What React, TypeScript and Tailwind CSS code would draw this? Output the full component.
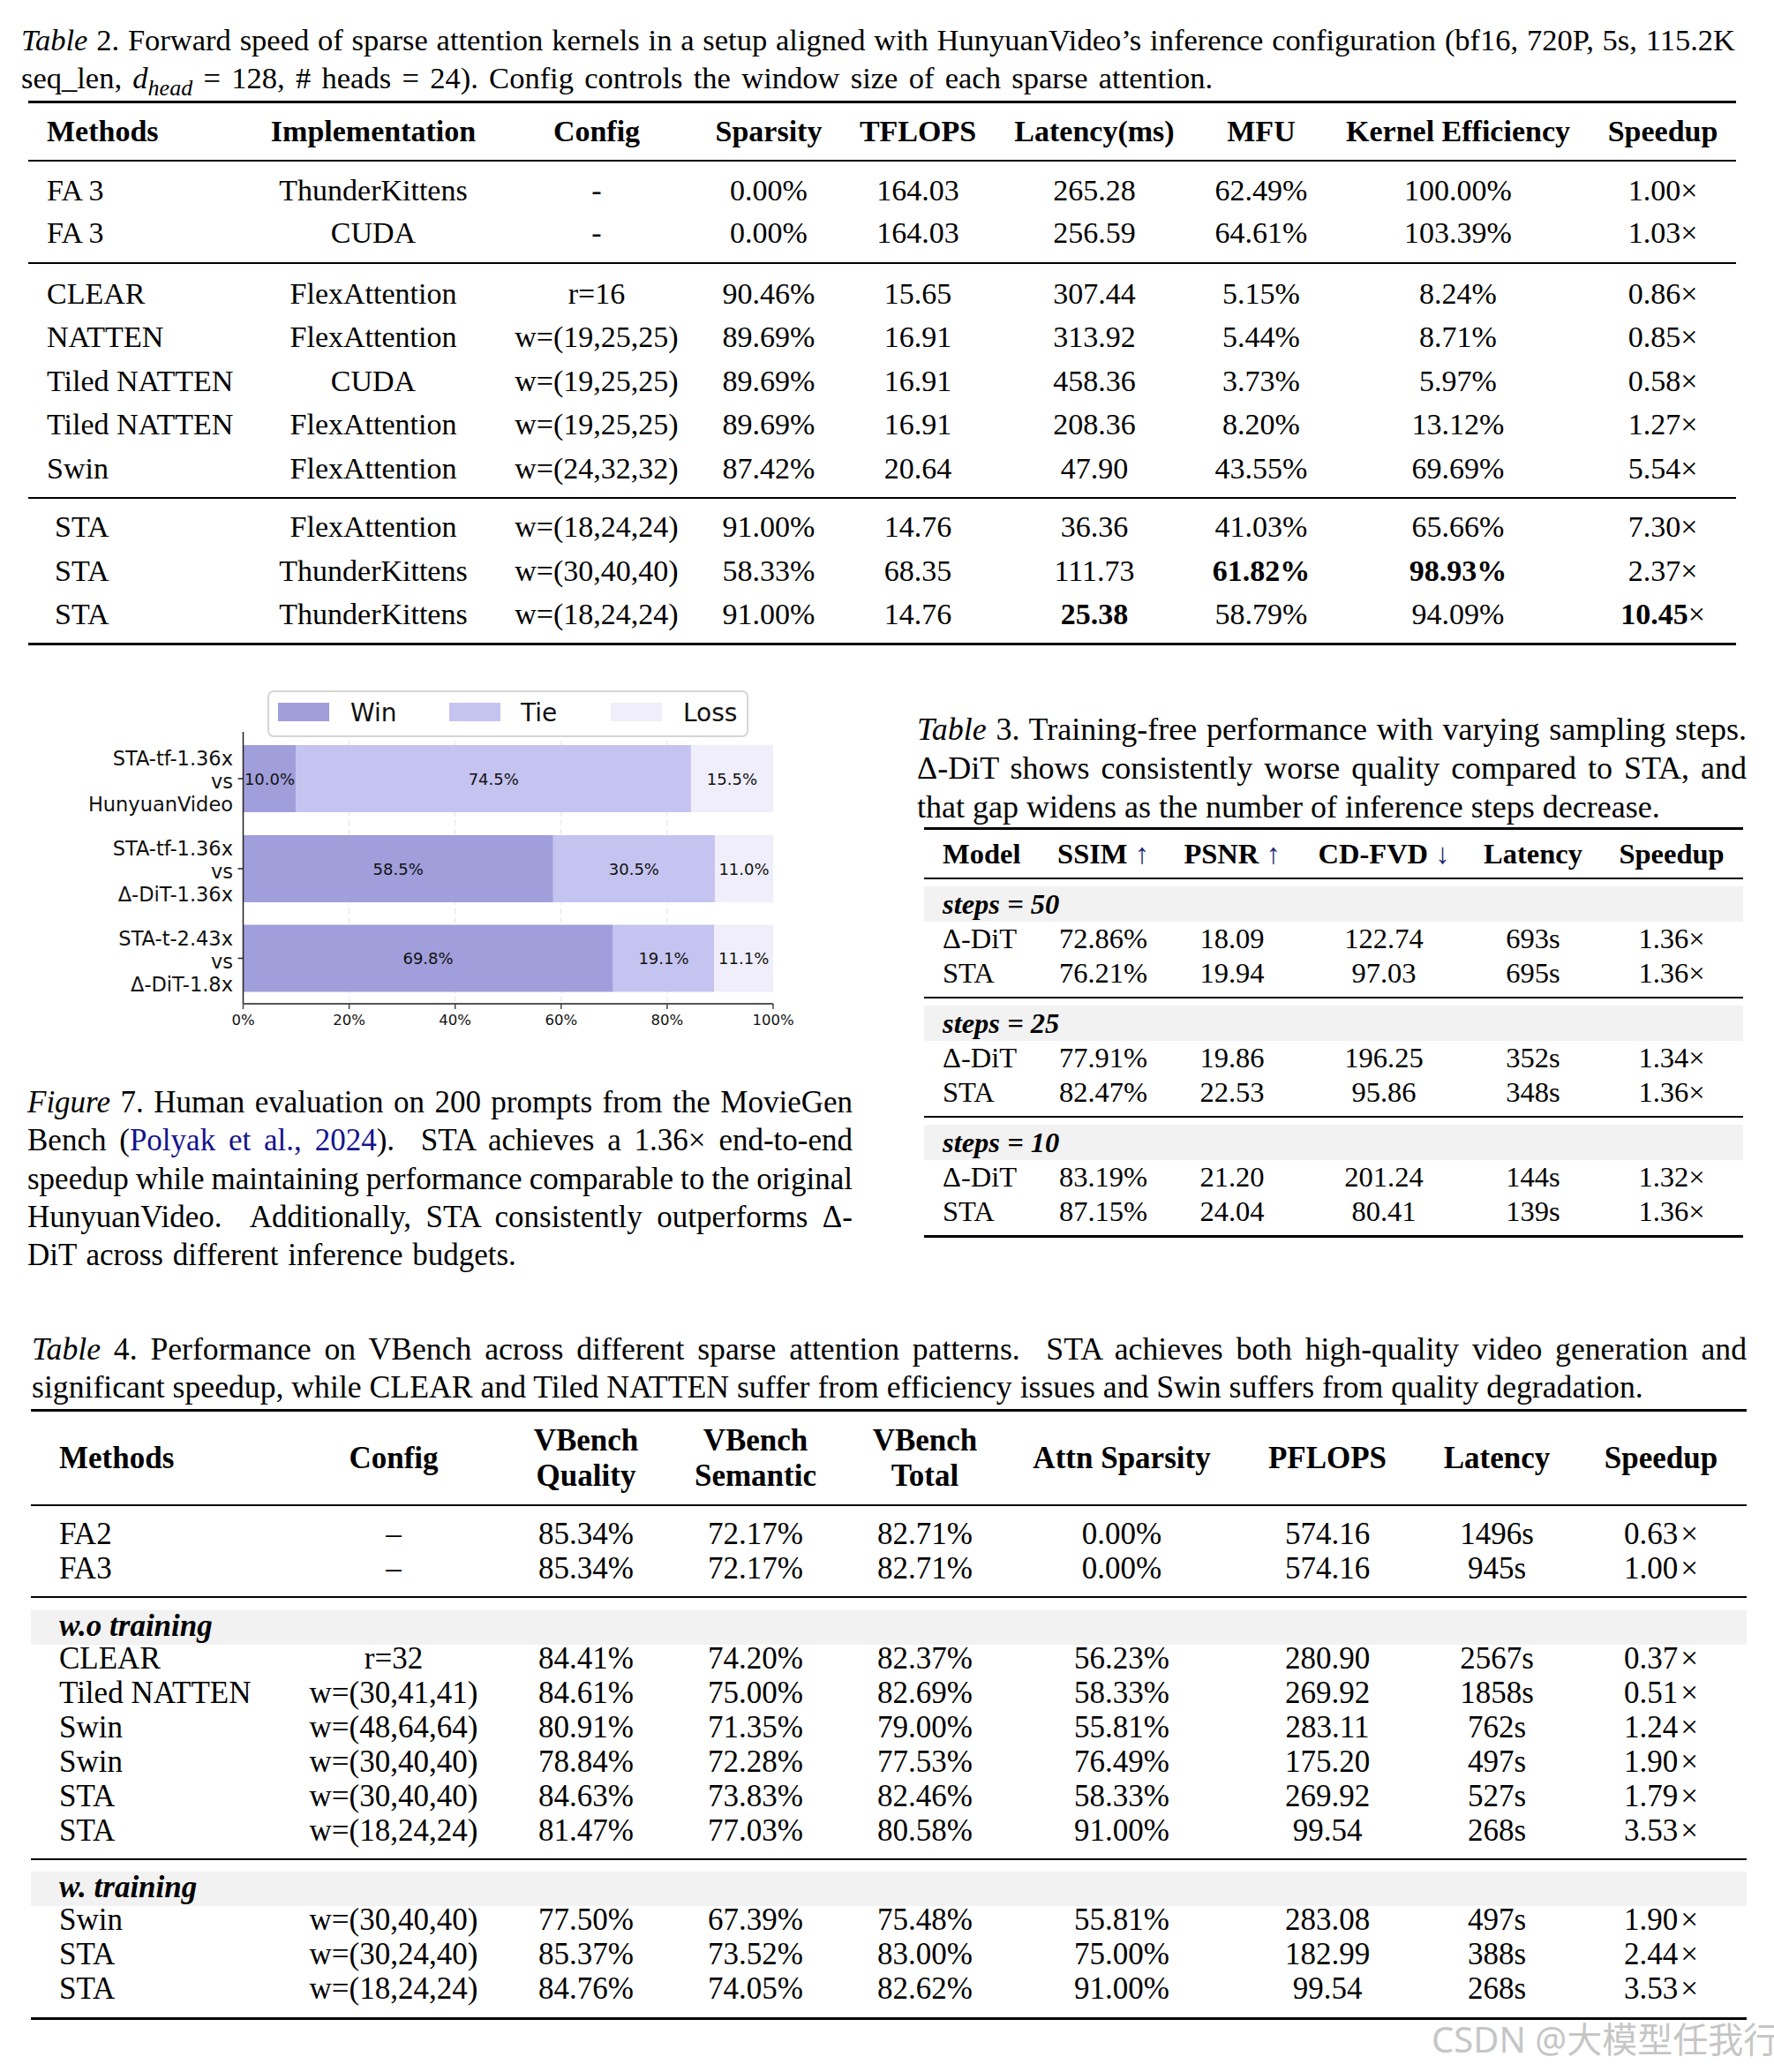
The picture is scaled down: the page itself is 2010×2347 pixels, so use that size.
import React from "react";

const T2 = "grid grid-cols-[249px_284px_222px_168px_170px_230px_148px_298px_166px] items-center";
const T3 = "grid grid-cols-[136px_134px_158px_186px_152px_162px] items-center";
const T4 = "grid grid-cols-[286px_250px_186px_198px_186px_260px_206px_178px_194px] items-center";
const JL = "text-justify [text-align-last:justify]";

function Row({ grid, h, cells, pl }: { grid: string; h: string; cells: React.ReactNode[]; pl: string }) {
  return (
    <div className={`${grid} ${h} leading-none`}>
      {cells.map((c, i) => (
        <div key={i} className={i === 0 ? `${pl} text-left whitespace-nowrap` : "text-center whitespace-nowrap"}>
          {c}
        </div>
      ))}
    </div>
  );
}

const B = ({ children }: { children: React.ReactNode }) => <b className="font-bold">{children}</b>;

const t2g1: React.ReactNode[][] = [
  ["FA 3", "ThunderKittens", "-", "0.00%", "164.03", "265.28", "62.49%", "100.00%", "1.00×"],
  ["FA 3", "CUDA", "-", "0.00%", "164.03", "256.59", "64.61%", "103.39%", "1.03×"],
];
const t2g2: React.ReactNode[][] = [
  ["CLEAR", "FlexAttention", "r=16", "90.46%", "15.65", "307.44", "5.15%", "8.24%", "0.86×"],
  ["NATTEN", "FlexAttention", "w=(19,25,25)", "89.69%", "16.91", "313.92", "5.44%", "8.71%", "0.85×"],
  ["Tiled NATTEN", "CUDA", "w=(19,25,25)", "89.69%", "16.91", "458.36", "3.73%", "5.97%", "0.58×"],
  ["Tiled NATTEN", "FlexAttention", "w=(19,25,25)", "89.69%", "16.91", "208.36", "8.20%", "13.12%", "1.27×"],
  ["Swin", "FlexAttention", "w=(24,32,32)", "87.42%", "20.64", "47.90", "43.55%", "69.69%", "5.54×"],
];
const STA2 = <span className="pl-[9px]">STA</span>;
const t2g3: React.ReactNode[][] = [
  [STA2, "FlexAttention", "w=(18,24,24)", "91.00%", "14.76", "36.36", "41.03%", "65.66%", "7.30×"],
  [STA2, "ThunderKittens", "w=(30,40,40)", "58.33%", "68.35", "111.73", <B>61.82%</B>, <B>98.93%</B>, "2.37×"],
  [STA2, "ThunderKittens", "w=(18,24,24)", "91.00%", "14.76", <B>25.38</B>, "58.79%", "94.09%", <span><B>10.45</B>×</span>],
];

const t3groups: { label: string; rows: React.ReactNode[][] }[] = [
  { label: "steps = 50", rows: [["Δ-DiT", "72.86%", "18.09", "122.74", "693s", "1.36×"], ["STA", "76.21%", "19.94", "97.03", "695s", "1.36×"]] },
  { label: "steps = 25", rows: [["Δ-DiT", "77.91%", "19.86", "196.25", "352s", "1.34×"], ["STA", "82.47%", "22.53", "95.86", "348s", "1.36×"]] },
  { label: "steps = 10", rows: [["Δ-DiT", "83.19%", "21.20", "201.24", "144s", "1.32×"], ["STA", "87.15%", "24.04", "80.41", "139s", "1.36×"]] },
];

const X = "\u200a×";
const t4g1: React.ReactNode[][] = [
  ["FA2", "–", "85.34%", "72.17%", "82.71%", "0.00%", "574.16", "1496s", "0.63" + X],
  ["FA3", "–", "85.34%", "72.17%", "82.71%", "0.00%", "574.16", "945s", "1.00" + X],
];
const t4g2: React.ReactNode[][] = [
  ["CLEAR", "r=32", "84.41%", "74.20%", "82.37%", "56.23%", "280.90", "2567s", "0.37" + X],
  ["Tiled NATTEN", "w=(30,41,41)", "84.61%", "75.00%", "82.69%", "58.33%", "269.92", "1858s", "0.51" + X],
  ["Swin", "w=(48,64,64)", "80.91%", "71.35%", "79.00%", "55.81%", "283.11", "762s", "1.24" + X],
  ["Swin", "w=(30,40,40)", "78.84%", "72.28%", "77.53%", "76.49%", "175.20", "497s", "1.90" + X],
  ["STA", "w=(30,40,40)", "84.63%", "73.83%", "82.46%", "58.33%", "269.92", "527s", "1.79" + X],
  ["STA", "w=(18,24,24)", "81.47%", "77.03%", "80.58%", "91.00%", "99.54", "268s", "3.53" + X],
];
const t4g3: React.ReactNode[][] = [
  ["Swin", "w=(30,40,40)", "77.50%", "67.39%", "75.48%", "55.81%", "283.08", "497s", "1.90" + X],
  ["STA", "w=(30,24,40)", "85.37%", "73.52%", "83.00%", "75.00%", "182.99", "388s", "2.44" + X],
  ["STA", "w=(18,24,24)", "84.76%", "74.05%", "82.62%", "91.00%", "99.54", "268s", "3.53" + X],
];

const WIN = "#a09edb";
const TIE = "#c5c3f0";
const LOSS = "#efeefa";

function Chart() {
  const x0 = 275.5;
  const k = 6.005;
  const px = (p: number) => x0 + p * k;
  const H = 76;
  const bars = [
    { y: 74, w: 10.0, t: 74.5, l: 15.5, labels: ["STA-tf-1.36x", "vs", "HunyuanVideo"] },
    { y: 176, w: 58.5, t: 30.5, l: 11.0, labels: ["STA-tf-1.36x", "vs", "Δ-DiT-1.36x"] },
    { y: 277.5, w: 69.8, t: 19.1, l: 11.1, labels: ["STA-t-2.43x", "vs", "Δ-DiT-1.8x"] },
  ];
  const ticks = [0, 20, 40, 60, 80, 100];
  return (
    <svg width={1000} height={410} viewBox="0 0 1000 410" className="block" fontFamily="'DejaVu Sans', sans-serif">
      {[20, 40, 60, 80].map((p) => (
        <line key={p} x1={px(p)} x2={px(p)} y1={59} y2={367} stroke="#e2e2e2" strokeWidth={1} strokeDasharray="6 4" />
      ))}
      {bars.map((b, i) => {
        const cy = b.y + H / 2;
        const segs = [
          { s: 0, e: b.w, c: WIN, v: b.w },
          { s: b.w, e: b.w + b.t, c: TIE, v: b.t },
          { s: b.w + b.t, e: 100, c: LOSS, v: b.l },
        ];
        return (
          <g key={i}>
            {segs.map((s, j) => (
              <rect key={j} x={px(s.s)} y={b.y} width={px(s.e) - px(s.s)} height={H} fill={s.c} />
            ))}
            {segs.map((s, j) => (
              <text key={"t" + j} x={(px(s.s) + px(s.e)) / 2} y={cy + 6.5} textAnchor="middle" fontSize={18} fill="#111">
                {s.v.toFixed(1)}%
              </text>
            ))}
            <line x1={269.5} x2={275.5} y1={cy} y2={cy} stroke="#222" strokeWidth={1.5} />
            <text x={264} y={cy - 15} textAnchor="end" fontSize={22.5} fill="#111">{b.labels[0]}</text>
            <text x={264} y={cy + 11} textAnchor="end" fontSize={22.5} fill="#111">{b.labels[1]}</text>
            <text x={264} y={cy + 37} textAnchor="end" fontSize={22.5} fill="#111">{b.labels[2]}</text>
          </g>
        );
      })}
      <line x1={275.5} x2={275.5} y1={59} y2={367} stroke="#222" strokeWidth={1.5} />
      <line x1={275.5} x2={876} y1={367} y2={367} stroke="#555" strokeWidth={2} />
      {ticks.map((p) => (
        <g key={p}>
          <line x1={px(p)} x2={px(p)} y1={367} y2={373} stroke="#444" strokeWidth={1.5} />
          <text x={px(p)} y={391} textAnchor="middle" fontSize={16.5} fill="#111">{p}%</text>
        </g>
      ))}
      <rect x={304} y={13} width={543} height={51} rx={6} fill="#fff" stroke="#d6d6d6" strokeWidth={2} />
      <rect x={315} y={26} width={58} height={21} fill={WIN} />
      <text x={397} y={47} fontSize={28} fill="#111">Win</text>
      <rect x={509} y={26} width={58} height={21} fill={TIE} />
      <text x={590} y={47} fontSize={28} fill="#111">Tie</text>
      <rect x={692} y={26} width={58} height={21} fill={LOSS} />
      <text x={774} y={47} fontSize={28} fill="#111">Loss</text>
    </svg>
  );
}

export default function App() {
  return (
    <div className="relative w-[2010px] h-[2347px] bg-white text-black overflow-hidden font-['Liberation_Serif','Times_New_Roman',serif]">
      {/* Table 2 */}
      <section className="pt-[24px]">
        <div className="ml-[24px] w-[1942px] text-[34.5px] leading-[43px]">
          <div className={JL}>
            <i>Table</i> 2. Forward speed of sparse attention kernels in a setup aligned with HunyuanVideo’s inference configuration (bf16, 720P, 5s, 115.2K
          </div>
          <div className="[word-spacing:3.7px]">
            seq_len, <i>d</i>
            <span className="relative top-[0.3em] text-[26px] leading-none italic">head</span> = 128, # heads = 24). Config controls the window size of each sparse attention.
          </div>
        </div>
        <div className="ml-[32px] w-[1935px] mt-[4px] border-t-[3px] border-black text-[34px]">
          <div className={`${T2} h-[64px] font-bold leading-none`}>
            <div className="pl-[21px]">Methods</div>
            <div className="text-center">Implementation</div>
            <div className="text-center">Config</div>
            <div className="text-center">Sparsity</div>
            <div className="text-center">TFLOPS</div>
            <div className="text-center">Latency(ms)</div>
            <div className="text-center">MFU</div>
            <div className="text-center">Kernel Efficiency</div>
            <div className="text-center">Speedup</div>
          </div>
          <div className="border-t-2 border-black pt-[9px] pb-[9px]">
            {t2g1.map((r, i) => (
              <Row key={i} grid={T2} h="h-[48px]" pl="pl-[21px]" cells={r} />
            ))}
          </div>
          <div className="border-t-2 border-black pt-[9px] pb-[7px]">
            {t2g2.map((r, i) => (
              <Row key={i} grid={T2} h="h-[49.5px]" pl="pl-[21px]" cells={r} />
            ))}
          </div>
          <div className="border-t-2 border-black border-b-[3px] pt-[8px] pb-[7px]">
            {t2g3.map((r, i) => (
              <Row key={i} grid={T2} h="h-[49.5px]" pl="pl-[21px]" cells={r} />
            ))}
          </div>
        </div>
      </section>

      {/* Figure 7 + Table 3 */}
      <section className="flex items-start">
        <div className="w-[1039px] shrink-0">
          <div className="mt-[39px]">
            <Chart />
          </div>
          <div className="ml-[31px] mt-[47px] w-[935px] text-[35px] leading-[43.25px]">
            <div className={JL}>
              <i>Figure</i> 7. Human evaluation on 200 prompts from the MovieGen
            </div>
            <div className={JL}>
              Bench (<span className="text-[#14148c]">Polyak et al., 2024</span>).&nbsp; STA achieves a 1.36× end-to-end
            </div>
            <div className={`${JL} [word-spacing:-1.5px]`}>speedup while maintaining performance comparable to the original</div>
            <div className={JL}>HunyuanVideo.&nbsp; Additionally, STA consistently outperforms Δ-</div>
            <div className="[word-spacing:2px]">DiT across different inference budgets.</div>
          </div>
        </div>
        <div className="w-[940px] shrink-0">
          <div className="mt-[73px] text-[36px] leading-[44px]">
            <div className={JL}>
              <i>Table</i> 3. Training-free performance with varying sampling steps.
            </div>
            <div className={JL}>Δ-DiT shows consistently worse quality compared to STA, and</div>
            <div>that gap widens as the number of inference steps decrease.</div>
          </div>
          <div className="ml-[8px] w-[928px] mt-[1px] border-t-[3px] border-black text-[32.5px]">
            <div className={`${T3} h-[54px] font-bold leading-none`}>
              <div className="pl-[21px]">Model</div>
              <div className="text-center">
                SSIM <span className="font-normal text-[#1c2573]">↑</span>
              </div>
              <div className="text-center">
                PSNR <span className="font-normal text-[#1c2573]">↑</span>
              </div>
              <div className="text-center">
                CD-FVD <span className="font-normal text-[#1c2573]">↓</span>
              </div>
              <div className="text-center">Latency</div>
              <div className="text-center">Speedup</div>
            </div>
            {t3groups.map((g, gi) => (
              <div
                key={gi}
                className={
                  gi === 2
                    ? "border-t-2 border-black border-b-[3px] pt-[8px] pb-[7px]"
                    : "border-t-2 border-black pt-[8px] pb-[7px]"
                }
              >
                <div className="h-[40px] bg-[#f2f2f2] flex items-center pl-[21px] font-bold italic leading-none">{g.label}</div>
                {g.rows.map((r, i) => (
                  <Row key={i} grid={T3} h="h-[39px]" pl="pl-[21px]" cells={r} />
                ))}
              </div>
            ))}
          </div>
        </div>
      </section>

      {/* Table 4 */}
      <section className="mt-[64px]">
        <div className="ml-[36px] w-[1943px] text-[35.7px] leading-[43px]">
          <div className={JL}>
            <i>Table</i> 4. Performance on VBench across different sparse attention patterns.&nbsp; STA achieves both high-quality video generation and
          </div>
          <div>significant speedup, while CLEAR and Tiled NATTEN suffer from efficiency issues and Swin suffers from quality degradation.</div>
        </div>
        <div className="ml-[35px] w-[1944px] mt-[3px] border-t-[3px] border-black text-[35px]">
          <div className={`${T4} h-[105px] font-bold leading-[40px]`}>
            <div className="pl-[32px]">Methods</div>
            <div className="text-center">Config</div>
            <div className="text-center">
              VBench
              <br />
              Quality
            </div>
            <div className="text-center">
              VBench
              <br />
              Semantic
            </div>
            <div className="text-center">
              VBench
              <br />
              Total
            </div>
            <div className="text-center">Attn Sparsity</div>
            <div className="text-center">PFLOPS</div>
            <div className="text-center">Latency</div>
            <div className="text-center">Speedup</div>
          </div>
          <div className="border-t-2 border-black pt-[11.5px] pb-[12.5px]">
            {t4g1.map((r, i) => (
              <Row key={i} grid={T4} h="h-[39px]" pl="pl-[32px]" cells={r} />
            ))}
          </div>
          <div className="border-t-2 border-black pt-[14px] pb-[12px]">
            <div className="h-[39px] bg-[#f2f2f2] flex items-center pl-[32px] font-bold italic leading-none pb-[4px]">w.o training</div>
            <div className="-mt-[4.5px]">
              {t4g2.map((r, i) => (
                <Row key={i} grid={T4} h="h-[39px]" pl="pl-[32px]" cells={r} />
              ))}
            </div>
          </div>
          <div className="border-t-2 border-black border-b-[3px] pt-[13.5px] pb-[13px]">
            <div className="h-[39px] bg-[#f2f2f2] flex items-center pl-[32px] font-bold italic leading-none pb-[4px]">w. training</div>
            <div className="-mt-[4px]">
              {t4g3.map((r, i) => (
                <Row key={i} grid={T4} h="h-[39px]" pl="pl-[32px]" cells={r} />
              ))}
            </div>
          </div>
        </div>
      </section>

      <div className="absolute left-[1622px] top-[2290px] text-[40px] leading-none text-[#c6c6c6] whitespace-nowrap font-['Noto_Sans','Noto_Sans_CJK_SC',sans-serif]">
        CSDN @大模型任我行
      </div>
    </div>
  );
}
